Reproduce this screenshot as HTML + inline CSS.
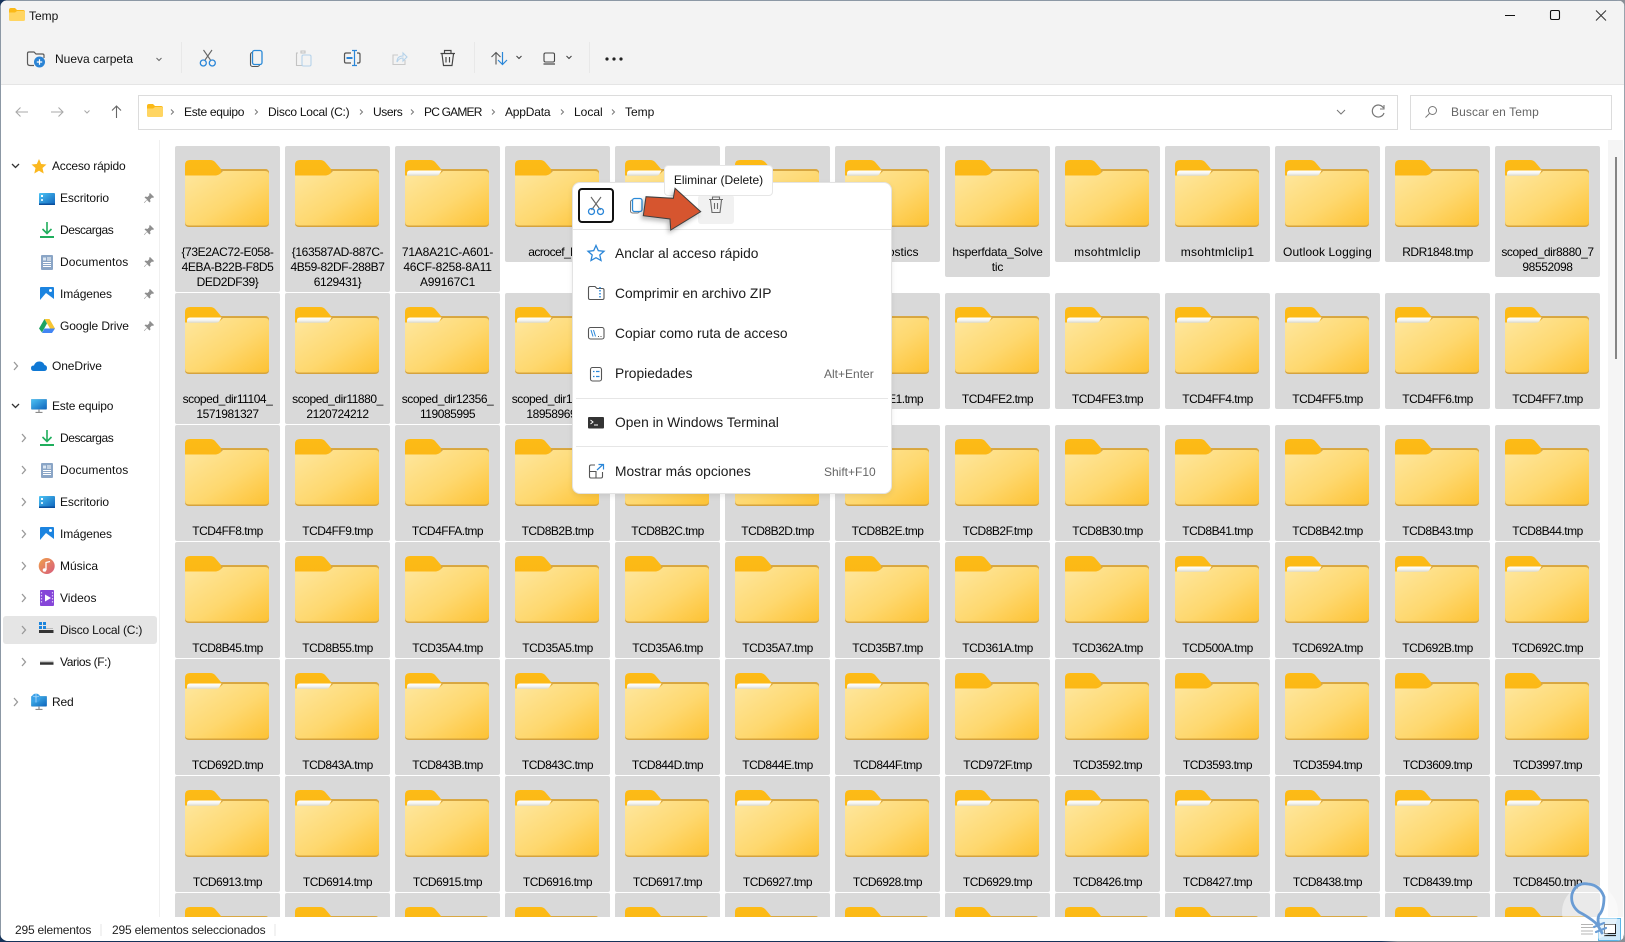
<!DOCTYPE html>
<html lang="es"><head><meta charset="utf-8"><title>Temp</title>
<style>
html,body{margin:0;padding:0}
body{width:1625px;height:942px;overflow:hidden;position:relative;background:linear-gradient(90deg,#16335a 0,#16335a 85%,#8a8f96 86%);font-family:"Liberation Sans",sans-serif;font-size:12px;color:#111}
#win{position:absolute;left:0;top:0;width:1625px;height:941px;background:#fff;border-radius:8px;overflow:hidden;box-shadow:inset 1px 0 0 #8c98a5,inset 0 1px 0 #8c98a5,inset -1px 0 0 #9aa3ad}
#bar{position:absolute;left:1px;top:1px;width:1623px;height:83px;background:#f3f3f3;border-bottom:1px solid #e5e5e5}
.a{position:absolute;white-space:nowrap;line-height:16px;height:16px}
.box{position:absolute;top:95px;height:33px;border:1px solid #dcdcdc;background:#fff}
#grid{position:absolute;left:175px;top:146px;width:1430px;height:771px;overflow:hidden}
.r{position:absolute;left:0;display:flex;gap:5px;align-items:flex-start}
.t{width:105px;height:116px;background:#d9d9d9;border-radius:2px;position:relative;flex:none;box-sizing:border-box;padding-top:99px;text-align:center;line-height:15px;letter-spacing:-.5px;color:#000;white-space:nowrap}
.l2{height:131px}.l3{height:146px}
.t svg{position:absolute;left:10px;top:14px;width:84px;height:67px}
.t.c{height:24px;padding:0;border-radius:2px 2px 0 0;overflow:hidden}
.t.c svg{height:10px}
.o{letter-spacing:0}
#scroll{position:absolute;left:1608px;top:140px;width:15px;height:777px;background:#f5f5f5}
#thumb{position:absolute;left:7px;top:17px;width:2px;height:202px;background:#858585}
#side{position:absolute;left:159px;top:140px;width:1px;height:777px;background:#f0f0f0}
#sel{position:absolute;left:3px;top:616px;width:154px;height:28px;background:#e5e5e5;border-radius:3px}
#layer,#top{position:absolute;left:0;top:0;width:1625px;height:941px}
#status{position:absolute;left:1px;top:917px;width:1622px;height:24px;background:#fff}
#menu{position:absolute;left:572px;top:182px;width:318px;height:310px;background:#fff;border:1px solid #e3e3e3;border-radius:8px;box-shadow:0 2px 6px rgba(0,0,0,.08)}
.m{position:absolute;font-size:13.8px;line-height:18px;height:18px;white-space:nowrap;color:#1a1a1a}
.k{position:absolute;font-size:12px;line-height:16px;color:#666;white-space:nowrap}
.hr{position:absolute;height:1px;background:#e6e6e6}
#cutb{position:absolute;left:578px;top:188px;width:32px;height:31px;border:2px solid #111;border-radius:4px;background:#fff}
#hov{position:absolute;left:698px;top:195px;width:36px;height:29px;background:#f1f1f1;border-radius:3px}
#tip{position:absolute;left:664px;top:165px;width:107px;height:29px;background:#fff;border:1px solid #e6e6e6;border-radius:4px;font-size:12px;line-height:29px;text-align:center;color:#111}
</style></head><body>
<svg width="0" height="0" style="position:absolute">
<defs>
<linearGradient id="fg" x1="0" y1="0" x2="1" y2="1"><stop offset="0" stop-color="#fee79f"/><stop offset=".55" stop-color="#fed86f"/><stop offset="1" stop-color="#fdc233"/></linearGradient>
<linearGradient id="tb" x1="0" y1="0" x2="0" y2="1"><stop offset="0" stop-color="#fdbb16"/><stop offset=".75" stop-color="#fbb717"/><stop offset="1" stop-color="#e6a822"/></linearGradient>
<linearGradient id="pp" x1="0" y1="0" x2="0" y2="1"><stop offset="0" stop-color="#fff"/><stop offset=".5" stop-color="#f6f6f2"/><stop offset="1" stop-color="#d8d8d0"/></linearGradient>
<linearGradient id="bl" x1="0" y1="0" x2="1" y2="1"><stop offset="0" stop-color="#4ec5f5"/><stop offset="1" stop-color="#0d62bb"/></linearGradient>
<linearGradient id="mu" x1="0" y1="0" x2="1" y2="1"><stop offset="0" stop-color="#f0a24a"/><stop offset="1" stop-color="#d65a7e"/></linearGradient>
<symbol id="F" viewBox="0 0 84 67"><path d="M0 5Q0 0 5 0H25Q28.500 0 30.500 2.500L36 9H80Q84 9 84 13V30H0Z" fill="url(#tb)"/><path d="M36 9H80Q84 9 84 13V16H36Z" fill="#d9a843"/><path d="M0 16H31Q34 15.500 36 13L38 10.500H80Q84 10.500 84 14V63Q84 67 80 67H4Q0 67 0 63Z" fill="#d5a33e"/><path d="M0 15.500H31Q34 15 36 13L38 11H80Q84 11 84 14.500V61.500Q84 65.500 80 65.500H4Q0 65.500 0 61.500Z" fill="url(#fg)"/></symbol>
<symbol id="P" viewBox="0 0 84 67"><use href="#F"/><path d="M2 13.500Q2 10.500 5 10.500H36.500L34.500 14Q33.500 15.800 30 15.800H2Z" fill="url(#pp)"/></symbol>
<symbol id="fs" viewBox="0 0 16 13"><path d="M0 2Q0 0 2 0H6L8 2H14Q16 2 16 4V6H0Z" fill="#fbb917"/><path d="M0 4.500H6L8 3H14.500Q16 3 16 4.500V11.500Q16 13 14.500 13H1.500Q0 13 0 11.500Z" fill="#ffd562"/></symbol>
<symbol id="pin" viewBox="0 0 10 10"><path d="M6 0L10 4 9 5 8 4.500 6 6.500 6.500 8.500 5.500 9.500 3 7 .5 10 0 9.500 3 6.500 .5 4.500 1.500 3.500 3.500 4 5.500 2 5 1Z" fill="#8f8f8f"/></symbol>
<symbol id="desk" viewBox="0 0 16 12"><rect width="16" height="12" rx="1" fill="url(#bl)"/><rect x="2" y="2" width="2" height="2" fill="#fff"/><rect x="2" y="6" width="2" height="2" fill="#cfefff"/><rect y="10.500" width="16" height="1.500" fill="#0b4f9d"/></symbol>
<symbol id="down" viewBox="0 0 14 16"><path d="M7 0V11M2.500 7L7 11.500 11.500 7" fill="none" stroke="#1fae5c" stroke-width="1.600"/><path d="M0 15H14" stroke="#1fae5c" stroke-width="2"/></symbol>
<symbol id="doc" viewBox="0 0 12 15"><rect width="12" height="15" rx="1" fill="#8aa5c6"/><path d="M6 3H10M6 5H10M2 7.500H10M2 9.500H10M2 11.500H10" stroke="#fff" stroke-width="1"/><rect x="2" y="2.500" width="3" height="3" fill="#dbe6f2"/></symbol>
<symbol id="img" viewBox="0 0 14 14"><rect width="14" height="14" rx="1" fill="#1c84e0"/><path d="M0 13L6 6 14 12V14H0Z" fill="#fff"/><circle cx="10.500" cy="3.500" r="1.500" fill="#fff"/></symbol>
<symbol id="gd" viewBox="0 0 16 14"><path d="M5.500 0H10.500L16 9.500H11Z" fill="#f7c531"/><path d="M5.500 0L8 4.500 3 13.500 0 9.500Z" fill="#1ea362"/><path d="M5.500 9.500H16L13 14H3Z" fill="#4285f4"/></symbol>
<symbol id="pc" viewBox="0 0 16 14"><rect width="16" height="10.500" rx="1" fill="url(#bl)" stroke="#8fb8d8" stroke-width=".5"/><path d="M8 10.500V13M4.500 13.500H11.500" stroke="#8b8b8b" stroke-width="1.200"/></symbol>
</defs></svg>
<div id="win">
<div id="bar"></div>
<div class="a" style="left:29px;top:8px">Temp</div>
<div class="a" style="left:55px;top:51px">Nueva carpeta</div>
<div class="box" style="left:138px;width:1258px"></div>
<div class="box" style="left:1410px;width:200px"></div>
<div class="a" style="left:184px;top:104px;letter-spacing:-.3px">Este equipo</div>
<div class="a" style="left:268px;top:104px;letter-spacing:-.25px">Disco Local (C:)</div>
<div class="a" style="left:373px;top:104px;letter-spacing:-.4px">Users</div>
<div class="a" style="left:424px;top:104px;letter-spacing:-.8px">PC GAMER</div>
<div class="a" style="left:505px;top:104px;letter-spacing:-.2px">AppData</div>
<div class="a" style="left:574px;top:104px">Local</div>
<div class="a" style="left:625px;top:104px">Temp</div>
<div class="a" style="left:1451px;top:104px;color:#666;letter-spacing:.1px">Buscar en Temp</div>

<div id="side"></div>
<div id="sel"></div>
<div class="a" style="left:52px;top:158px;letter-spacing:-.2px">Acceso rápido</div>
<div class="a" style="left:60px;top:190px;letter-spacing:-.1px">Escritorio</div>
<div class="a" style="left:60px;top:222px;letter-spacing:-.45px">Descargas</div>
<div class="a" style="left:60px;top:254px;letter-spacing:.1px">Documentos</div>
<div class="a" style="left:60px;top:286px;letter-spacing:-.1px">Imágenes</div>
<div class="a" style="left:60px;top:318px;letter-spacing:-.1px">Google Drive</div>
<div class="a" style="left:52px;top:358px;letter-spacing:-.1px">OneDrive</div>
<div class="a" style="left:52px;top:398px;letter-spacing:-.2px">Este equipo</div>
<div class="a" style="left:60px;top:430px;letter-spacing:-.45px">Descargas</div>
<div class="a" style="left:60px;top:462px;letter-spacing:.1px">Documentos</div>
<div class="a" style="left:60px;top:494px;letter-spacing:-.1px">Escritorio</div>
<div class="a" style="left:60px;top:526px;letter-spacing:-.1px">Imágenes</div>
<div class="a" style="left:60px;top:558px">Música</div>
<div class="a" style="left:60px;top:590px">Videos</div>
<div class="a" style="left:60px;top:622px;letter-spacing:-.2px">Disco Local (C:)</div>
<div class="a" style="left:60px;top:654px;letter-spacing:-.4px">Varios (F:)</div>
<div class="a" style="left:52px;top:694px;letter-spacing:-.2px">Red</div>

<div id="grid">
<div class="r" style="top:0">
<div class="t l3" style="letter-spacing:-.4px"><svg><use href="#F"/></svg>{73E2AC72-E058-<br>4EBA-B22B-F8D5<br>DED2DF39}</div>
<div class="t l3" style="letter-spacing:-.4px"><svg><use href="#F"/></svg>{163587AD-887C-<br>4B59-82DF-288B7<br>6129431}</div>
<div class="t l3" style="letter-spacing:-.2px"><svg><use href="#P"/></svg>71A8A21C-A601-<br>46CF-8258-8A11<br>A99167C1</div>
<div class="t"><svg><use href="#F"/></svg>acrocef_low</div>
<div class="t"><svg><use href="#P"/></svg>&nbsp;</div>
<div class="t"><svg><use href="#F"/></svg>&nbsp;</div>
<div class="t o"><svg><use href="#P"/></svg>Diagnostics</div>
<div class="t l2" style="letter-spacing:-.2px"><svg><use href="#F"/></svg>hsperfdata_Solve<br>tic</div>
<div class="t o" style="letter-spacing:.3px"><svg><use href="#F"/></svg>msohtmlclip</div>
<div class="t o" style="letter-spacing:.3px"><svg><use href="#P"/></svg>msohtmlclip1</div>
<div class="t o" style="letter-spacing:.1px"><svg><use href="#P"/></svg>Outlook Logging</div>
<div class="t"><svg><use href="#F"/></svg>RDR1848.tmp</div>
<div class="t l2" style="letter-spacing:-.4px"><svg><use href="#P"/></svg>scoped_dir8880_7<br>98552098</div>
</div>
<div class="r" style="top:147px">
<div class="t l2" style="letter-spacing:-.45px"><svg><use href="#P"/></svg>scoped_dir11104_<br>1571981327</div>
<div class="t l2" style="letter-spacing:-.45px"><svg><use href="#P"/></svg>scoped_dir11880_<br>2120724212</div>
<div class="t l2" style="letter-spacing:-.45px"><svg><use href="#P"/></svg>scoped_dir12356_<br>119085995</div>
<div class="t l2" style="letter-spacing:-.45px"><svg><use href="#P"/></svg>scoped_dir13744_<br>1895896933</div>
<div class="t"><svg><use href="#P"/></svg>&nbsp;</div>
<div class="t"><svg><use href="#P"/></svg>&nbsp;</div>
<div class="t"><svg><use href="#P"/></svg>TCD4FE1.tmp</div>
<div class="t"><svg><use href="#P"/></svg>TCD4FE2.tmp</div>
<div class="t"><svg><use href="#P"/></svg>TCD4FE3.tmp</div>
<div class="t"><svg><use href="#P"/></svg>TCD4FF4.tmp</div>
<div class="t"><svg><use href="#P"/></svg>TCD4FF5.tmp</div>
<div class="t"><svg><use href="#P"/></svg>TCD4FF6.tmp</div>
<div class="t"><svg><use href="#P"/></svg>TCD4FF7.tmp</div>
</div>
<div class="r" style="top:279px">
<div class="t"><svg><use href="#F"/></svg>TCD4FF8.tmp</div>
<div class="t"><svg><use href="#F"/></svg>TCD4FF9.tmp</div>
<div class="t"><svg><use href="#F"/></svg>TCD4FFA.tmp</div>
<div class="t"><svg><use href="#F"/></svg>TCD8B2B.tmp</div>
<div class="t"><svg><use href="#F"/></svg>TCD8B2C.tmp</div>
<div class="t"><svg><use href="#F"/></svg>TCD8B2D.tmp</div>
<div class="t"><svg><use href="#F"/></svg>TCD8B2E.tmp</div>
<div class="t"><svg><use href="#F"/></svg>TCD8B2F.tmp</div>
<div class="t"><svg><use href="#F"/></svg>TCD8B30.tmp</div>
<div class="t"><svg><use href="#F"/></svg>TCD8B41.tmp</div>
<div class="t"><svg><use href="#F"/></svg>TCD8B42.tmp</div>
<div class="t"><svg><use href="#F"/></svg>TCD8B43.tmp</div>
<div class="t"><svg><use href="#F"/></svg>TCD8B44.tmp</div>
</div>
<div class="r" style="top:396px">
<div class="t"><svg><use href="#F"/></svg>TCD8B45.tmp</div>
<div class="t"><svg><use href="#F"/></svg>TCD8B55.tmp</div>
<div class="t"><svg><use href="#F"/></svg>TCD35A4.tmp</div>
<div class="t"><svg><use href="#F"/></svg>TCD35A5.tmp</div>
<div class="t"><svg><use href="#F"/></svg>TCD35A6.tmp</div>
<div class="t"><svg><use href="#F"/></svg>TCD35A7.tmp</div>
<div class="t"><svg><use href="#F"/></svg>TCD35B7.tmp</div>
<div class="t"><svg><use href="#F"/></svg>TCD361A.tmp</div>
<div class="t"><svg><use href="#F"/></svg>TCD362A.tmp</div>
<div class="t"><svg><use href="#P"/></svg>TCD500A.tmp</div>
<div class="t"><svg><use href="#P"/></svg>TCD692A.tmp</div>
<div class="t"><svg><use href="#P"/></svg>TCD692B.tmp</div>
<div class="t"><svg><use href="#P"/></svg>TCD692C.tmp</div>
</div>
<div class="r" style="top:513px">
<div class="t"><svg><use href="#P"/></svg>TCD692D.tmp</div>
<div class="t"><svg><use href="#P"/></svg>TCD843A.tmp</div>
<div class="t"><svg><use href="#P"/></svg>TCD843B.tmp</div>
<div class="t"><svg><use href="#P"/></svg>TCD843C.tmp</div>
<div class="t"><svg><use href="#P"/></svg>TCD844D.tmp</div>
<div class="t"><svg><use href="#P"/></svg>TCD844E.tmp</div>
<div class="t"><svg><use href="#P"/></svg>TCD844F.tmp</div>
<div class="t"><svg><use href="#F"/></svg>TCD972F.tmp</div>
<div class="t"><svg><use href="#F"/></svg>TCD3592.tmp</div>
<div class="t"><svg><use href="#F"/></svg>TCD3593.tmp</div>
<div class="t"><svg><use href="#F"/></svg>TCD3594.tmp</div>
<div class="t"><svg><use href="#F"/></svg>TCD3609.tmp</div>
<div class="t"><svg><use href="#F"/></svg>TCD3997.tmp</div>
</div>
<div class="r" style="top:630px">
<div class="t"><svg><use href="#P"/></svg>TCD6913.tmp</div>
<div class="t"><svg><use href="#P"/></svg>TCD6914.tmp</div>
<div class="t"><svg><use href="#P"/></svg>TCD6915.tmp</div>
<div class="t"><svg><use href="#P"/></svg>TCD6916.tmp</div>
<div class="t"><svg><use href="#P"/></svg>TCD6917.tmp</div>
<div class="t"><svg><use href="#P"/></svg>TCD6927.tmp</div>
<div class="t"><svg><use href="#P"/></svg>TCD6928.tmp</div>
<div class="t"><svg><use href="#P"/></svg>TCD6929.tmp</div>
<div class="t"><svg><use href="#P"/></svg>TCD8426.tmp</div>
<div class="t"><svg><use href="#P"/></svg>TCD8427.tmp</div>
<div class="t"><svg><use href="#P"/></svg>TCD8438.tmp</div>
<div class="t"><svg><use href="#P"/></svg>TCD8439.tmp</div>
<div class="t"><svg><use href="#P"/></svg>TCD8450.tmp</div>
</div>
<div class="r" style="top:747px;height:24px">
<div class="t c"><svg viewBox="0 0 84 10"><use href="#F" width="84" height="67"/></svg></div><div class="t c"><svg viewBox="0 0 84 10"><use href="#F" width="84" height="67"/></svg></div><div class="t c"><svg viewBox="0 0 84 10"><use href="#F" width="84" height="67"/></svg></div><div class="t c"><svg viewBox="0 0 84 10"><use href="#F" width="84" height="67"/></svg></div><div class="t c"><svg viewBox="0 0 84 10"><use href="#F" width="84" height="67"/></svg></div><div class="t c"><svg viewBox="0 0 84 10"><use href="#F" width="84" height="67"/></svg></div><div class="t c"><svg viewBox="0 0 84 10"><use href="#F" width="84" height="67"/></svg></div><div class="t c"><svg viewBox="0 0 84 10"><use href="#F" width="84" height="67"/></svg></div><div class="t c"><svg viewBox="0 0 84 10"><use href="#F" width="84" height="67"/></svg></div><div class="t c"><svg viewBox="0 0 84 10"><use href="#F" width="84" height="67"/></svg></div><div class="t c"><svg viewBox="0 0 84 10"><use href="#F" width="84" height="67"/></svg></div><div class="t c"><svg viewBox="0 0 84 10"><use href="#F" width="84" height="67"/></svg></div><div class="t c"><svg viewBox="0 0 84 10"><use href="#F" width="84" height="67"/></svg></div>
</div>
</div>

<div id="scroll"><div id="thumb"></div></div>
<div id="status"></div>
<div class="a" style="left:15px;top:922px;color:#222;letter-spacing:-.2px">295 elementos</div>
<div class="a" style="left:112px;top:922px;color:#222;letter-spacing:-.17px">295 elementos seleccionados</div>

<svg id="layer" viewBox="0 0 1625 941" fill="none">
<use href="#fs" x="9" y="8" width="16" height="13"/>
<path d="M1505 15.500H1515" stroke="#111" stroke-width="1"/>
<rect x="1550.500" y="10.500" width="9" height="9" rx="1.500" stroke="#111" stroke-width="1.100"/>
<path d="M1596 10.500L1606 20.500M1606 10.500L1596 20.500" stroke="#333" stroke-width="1"/>
<path d="M27.500 63V53.500Q27.500 52 29 52H34L36 54H42.500Q44 54 44 55.500V58M27.500 63Q27.500 65.500 30 65.500H34" stroke="#5a5a5a" stroke-width="1.200"/>
<circle cx="39.500" cy="62" r="5.500" fill="#2a83d4"/><path d="M36.800 62H42.200M39.500 59.300V64.700" stroke="#fff" stroke-width="1.200"/>
<path d="M156.500 58L159 60.500 161.500 58" stroke="#666" stroke-width="1"/>
<path d="M181.500 42V73M474.500 42V73M589.500 42V73" stroke="#e8e8e8"/>
<path d="M203.500 50L210.500 60M212 50L205 60" stroke="#666" stroke-width="1.100"/>
<circle cx="203.300" cy="63" r="3" stroke="#2a86d8" stroke-width="1.300"/><circle cx="212.300" cy="63" r="3" stroke="#2a86d8" stroke-width="1.300"/>
<rect x="250.500" y="52.500" width="9" height="14" rx="2" stroke="#555" stroke-width="1.100"/>
<rect x="252.500" y="50.500" width="9.500" height="14" rx="2" fill="#f3f3f3" stroke="#2a8ad8" stroke-width="1.300"/>
<path d="M298 53H296.500V65.500H302M301 51H305V53H301Z" stroke="#c3c3c3" stroke-width="1.100"/><rect x="302" y="55" width="9" height="11" rx="1.500" stroke="#b5d2ea" stroke-width="1.100"/>
<path d="M351 53H346Q344.500 53 344.500 54.500V61.500Q344.500 63 346 63H351M357 53H358.500Q360 53 360 54.500V61.500Q360 63 358.500 63H357" stroke="#555" stroke-width="1.200"/>
<path d="M346.500 58H352.500" stroke="#2a86d8" stroke-width="2"/><path d="M354.500 50.500V65.500M352 50.500H357M352 65.500H357" stroke="#2a86d8" stroke-width="1.200"/>
<path d="M398 55H393V64.500H405V60" stroke="#c9c9c9" stroke-width="1.100"/><path d="M397 62Q397 56 403 56V53L407 57 403 61V58Q399 58 397 62Z" stroke="#b5d2ea" stroke-width="1.100"/>
<path d="M440.500 53.500H455M444.500 53V50.500H451V53M442 54L443.500 65.500H452L453.500 54M446 57V62.500M449.500 57V62.500" stroke="#444" stroke-width="1.150"/>
<path d="M496 64.500V52.500M491.500 57L496 52.500 500.500 57" stroke="#555" stroke-width="1.100"/><path d="M502.500 52V64.500M498 60L502.500 64.500 507 60" stroke="#2a86d8" stroke-width="1.200"/>
<path d="M516.500 56L519 58.500 521.500 56M566.500 56L569 58.500 571.500 56" stroke="#444" stroke-width="1.100"/>
<rect x="544" y="53" width="10.500" height="9" rx="1.500" stroke="#444" stroke-width="1.100"/><path d="M543.500 64H555" stroke="#444" stroke-width="1.200"/>
<g fill="#222"><circle cx="607" cy="59" r="1.600"/><circle cx="614" cy="59" r="1.600"/><circle cx="621" cy="59" r="1.600"/></g>
<path d="M28 112H16M20.500 107.500L16 112 20.500 116.500" stroke="#a9a9a9" stroke-width="1.100"/>
<path d="M51 112H63M58.500 107.500L63 112 58.500 116.500" stroke="#a9a9a9" stroke-width="1.100"/>
<path d="M84.500 110.500L87 113 89.500 110.500" stroke="#a9a9a9" stroke-width="1"/>
<path d="M116.500 118V106M112 110.500L116.500 106 121 110.500" stroke="#666" stroke-width="1.100"/>
<use href="#fs" x="147" y="104" width="16" height="13"/>
<g stroke="#777" stroke-width="1"><path d="M171 109.500L173.500 112 171 114.500M255 109.500L257.500 112 255 114.500M360 109.500L362.500 112 360 114.500M411 109.500L413.500 112 411 114.500M492 109.500L494.500 112 492 114.500M561 109.500L563.500 112 561 114.500M612 109.500L614.500 112 612 114.500"/></g>
<path d="M1337 110L1341 114 1345 110" stroke="#777" stroke-width="1"/>
<path d="M1383.500 108A6 6 0 1 0 1384 113" stroke="#777" stroke-width="1.200"/><path d="M1384 105V109H1380" stroke="#777" stroke-width="1.100"/>
<circle cx="1432.500" cy="110.500" r="4" stroke="#777" stroke-width="1"/><path d="M1429.500 113.500L1425.500 117.500" stroke="#777" stroke-width="1"/>
<path d="M12 164L15.500 167.500 19 164M12 404L15.500 407.500 19 404" stroke="#333" stroke-width="1.300"/>
<path d="M14 362L17.500 366 14 370M14 698L17.500 702 14 706" stroke="#999" stroke-width="1.300"/>
<g stroke="#999" stroke-width="1.300"><path d="M22 434L25.500 438 22 442M22 466L25.500 470 22 474M22 498L25.500 502 22 506M22 530L25.500 534 22 538M22 562L25.500 566 22 570M22 594L25.500 598 22 602M22 626L25.500 630 22 634M22 658L25.500 662 22 666"/></g>
<path d="M39 159L41.200 164 46.500 164.500 42.500 168 43.700 173.500 39 170.700 34.300 173.500 35.500 168 31.500 164.500 36.800 164Z" fill="#fbb81f"/>
<use href="#desk" x="39" y="193" width="16" height="12"/>
<use href="#down" x="40" y="222" width="14" height="16"/>
<use href="#doc" x="41" y="255" width="12" height="15"/>
<use href="#img" x="40" y="287" width="14" height="14"/>
<use href="#gd" x="39" y="319" width="16" height="14"/>
<g><use href="#pin" x="144" y="193" width="10" height="10"/><use href="#pin" x="144" y="225" width="10" height="10"/><use href="#pin" x="144" y="257" width="10" height="10"/><use href="#pin" x="144" y="289" width="10" height="10"/><use href="#pin" x="144" y="321" width="10" height="10"/></g>
<path d="M34 371Q31 371 31 368 31 365.500 34 365.500 35.500 361 40 361.500 43.500 362 44.500 365 47 365.500 47 368 47 371 44 371Z" fill="#0f78d4"/>
<use href="#pc" x="31" y="399" width="16" height="14"/>
<use href="#down" x="40" y="430" width="14" height="16"/>
<use href="#doc" x="41" y="463" width="12" height="15"/>
<use href="#desk" x="39" y="496" width="16" height="12"/>
<use href="#img" x="40" y="527" width="14" height="14"/>
<circle cx="46.700" cy="566" r="8" fill="url(#mu)"/><path d="M46 570V562.500L50 561.500" stroke="#fff" stroke-width="1.300"/><circle cx="44.500" cy="570" r="1.800" fill="#fff"/>
<rect x="40" y="590" width="14" height="16" rx="1" fill="#8646d8"/><path d="M45 594.500L51 598 45 601.500Z" fill="#fff"/><path d="M41.500 592V604M52.500 592V604" stroke="#d8c4f7" stroke-width="1.200" stroke-dasharray="1.500 1.500"/>
<g fill="#1b84dc"><rect x="39" y="622" width="3" height="3"/><rect x="43" y="622" width="3" height="3"/><rect x="39" y="626" width="3" height="3"/><rect x="43" y="626" width="3" height="3"/></g><path d="M39 631.500H53.500" stroke="#333" stroke-width="3"/><path d="M46 628.500H53" stroke="#bbb"/>
<path d="M40 661.500H53.500" stroke="#ccc" stroke-width="1.500"/><path d="M40 663.500H53.500" stroke="#333" stroke-width="2.500"/>
<use href="#pc" x="31" y="696" width="16" height="14"/><circle cx="36" cy="698" r="4.500" fill="#3aa0e8"/><path d="M33 696Q36 698 39 696M36 693.500V702.500" stroke="#bfe4ff" stroke-width=".7"/>
<path d="M101 924V936M275 924V936" stroke="#e6e6e6"/>
<path d="M1581 924.500H1593M1581 927.500H1593M1581 931H1593M1581 934H1593" stroke="#777" stroke-width="1"/>
<rect x="1598.500" y="918.500" width="22" height="22" fill="#cfe9fa" stroke="#5bb5e8"/>
<rect x="1604.500" y="924.500" width="11" height="9" fill="#fff" stroke="#222"/><path d="M1604 935.500H1616" stroke="#222" stroke-width="1.300"/>
<circle cx="1590" cy="912" r="28" fill="#fff" fill-opacity=".45"/>
<path d="M1602 933Q1598 924 1592 920 1585 915 1579 912 1570 905 1572 894 1576 882 1588 884 1600 885 1604 897 1604 910 1599 915 1597 920 1599 925" stroke="#6a9cd4" stroke-width="2.800" stroke-linecap="round" fill="none"/>
<path d="M1594 927L1604 923M1596 932L1606 928" stroke="#6a9cd4" stroke-width="2.200" stroke-linecap="round"/>
</svg>

<div id="menu"></div>
<div id="cutb"></div>
<div id="hov"></div>
<div class="hr" style="left:573px;top:229px;width:318px"></div>
<div class="hr" style="left:576px;top:398px;width:312px"></div>
<div class="hr" style="left:576px;top:446px;width:312px"></div>
<div class="m" style="left:615px;top:245px">Anclar al acceso rápido</div>
<div class="m" style="left:615px;top:285px">Comprimir en archivo ZIP</div>
<div class="m" style="left:615px;top:325px">Copiar como ruta de acceso</div>
<div class="m" style="left:615px;top:365px">Propiedades</div>
<div class="m" style="left:615px;top:414px">Open in Windows Terminal</div>
<div class="m" style="left:615px;top:463px">Mostrar más opciones</div>
<div class="k" style="left:824px;top:366px">Alt+Enter</div>
<div class="k" style="left:824px;top:464px">Shift+F10</div>
<div id="tip">Eliminar (Delete)</div>
<svg id="top" viewBox="0 0 1625 941" fill="none">
<path d="M591 197L600.500 210M601 197L591.500 210" stroke="#666" stroke-width="1.100"/>
<circle cx="591.500" cy="211.500" r="3" stroke="#2a86d8" stroke-width="1.300"/><circle cx="600.500" cy="211.500" r="3" stroke="#2a86d8" stroke-width="1.300"/>
<rect x="630.500" y="200" width="9" height="13" rx="2" stroke="#777"/><rect x="632.500" y="198.500" width="9.500" height="13" rx="2" fill="#fff" stroke="#2a8ad8" stroke-width="1.300"/>
<path d="M709 199.500H723M712.500 199V197H719.500V199M710.500 200L712 212.500H720L721.500 200M714.500 203V209M717.500 203V209" stroke="#6a6a6a" stroke-width="1.100"/>
<path d="M596 245.500L598.300 250.700 604 251.300 599.800 255 601 260.500 596 257.700 591 260.500 592.200 255 588 251.300 593.700 250.700Z" stroke="#2a86d8" stroke-width="1.300"/>
<path d="M588.500 298V288Q588.500 286.500 590 286.500H595L597 288.500H602.500Q604 288.500 604 290V298Q604 299.500 602.500 299.500H590Q588.500 299.500 588.500 298Z" stroke="#555" stroke-width="1.100"/><path d="M600 287V299" stroke="#2a86d8" stroke-width="1.500" stroke-dasharray="1.500 1.500"/>
<rect x="588.500" y="327.500" width="15.500" height="11.500" rx="2" stroke="#555" stroke-width="1.100"/><path d="M591 330L593 336.500M593.500 330L595.500 336.500" stroke="#2a86d8" stroke-width="1"/><path d="M598 336.500H599M600.500 336.500H601.500" stroke="#555"/>
<rect x="590.500" y="367.500" width="11" height="13.500" rx="2" stroke="#555" stroke-width="1.100"/><path d="M593 371.500H594.500M596 371.500H599.500M593 376.500H594.500M596 376.500H599.500" stroke="#2a86d8" stroke-width="1.300"/>
<rect x="588" y="417" width="16" height="11.500" rx="1" fill="#333"/><path d="M590.500 420L593 422 590.500 424M594 425H598" stroke="#fff" stroke-width="1"/>
<path d="M595 465H591Q589.500 465 589.500 466.500V476.500Q589.500 478 591 478H601Q602.500 478 602.500 476.500V472M589.500 471.500H596V478" stroke="#555" stroke-width="1.100"/><path d="M597 470L603 464.500M598.500 464.500H603.500V469.500" stroke="#2a86d8" stroke-width="1.200"/>
<path d="M675 188.300L700.700 211.700 670.700 230 670 219 643.300 215.700 646 196.700 673.300 198.300Z" fill="#d6552f" stroke="#3f3f3f" stroke-width="1" style="filter:drop-shadow(-2px 3px 2px rgba(0,0,0,.25))"/>
</svg>
</div>
</body></html>
